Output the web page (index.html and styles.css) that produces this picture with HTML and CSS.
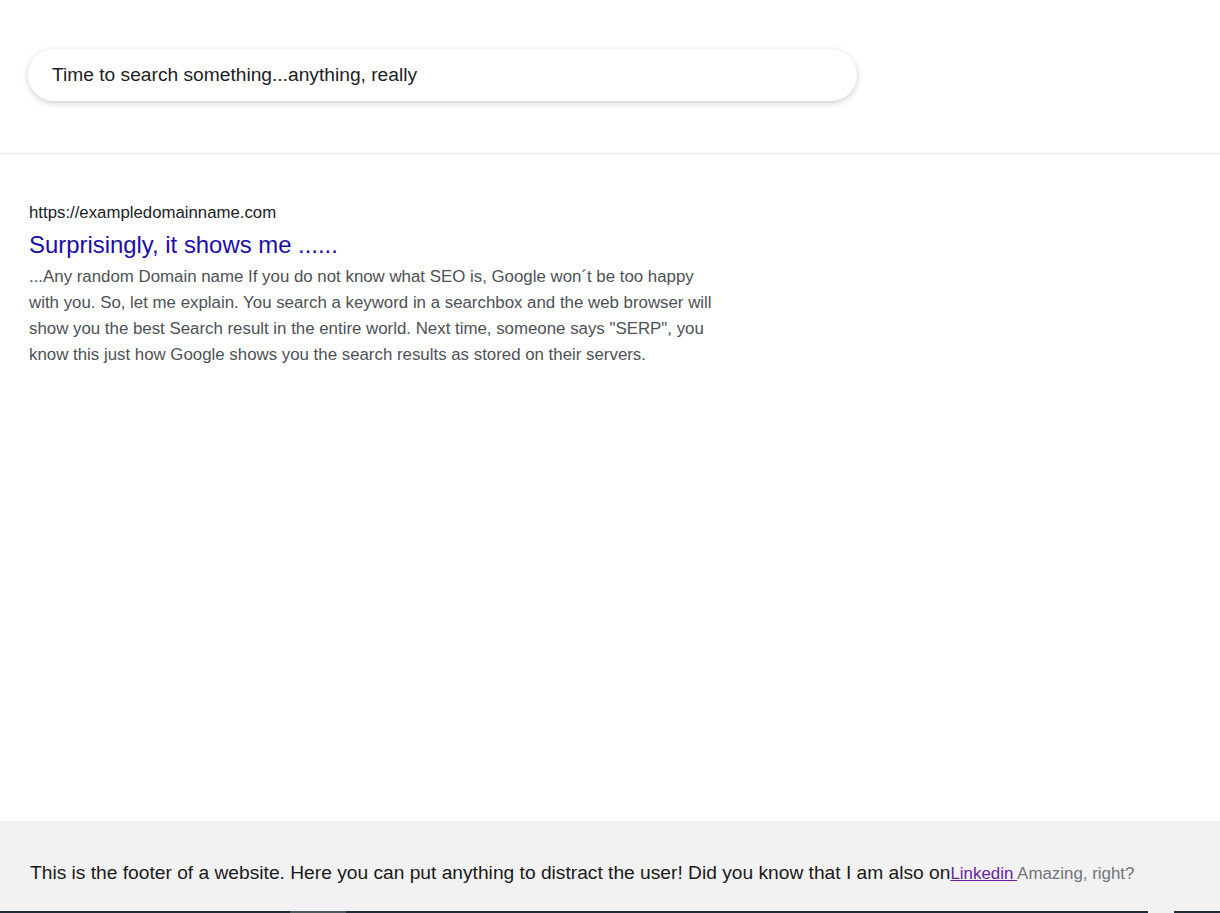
FILE: index.html
```html
<!DOCTYPE html>
<html lang="en">
<head>
<meta charset="utf-8">
<title>SERP</title>
<link rel="stylesheet" href="styles.css">
</head>
<body>
<div class="page">
  <header class="header">
    <div class="searchbox">Time to search something...anything, really</div>
  </header>
  <main class="results">
    <article class="result">
      <div class="result-url">https://exampledomainname.com</div>
      <a class="result-title" href="#">Surprisingly, it shows me ......</a>
      <p class="result-desc">...Any random Domain name If you do not know what SEO is, Google won´t be too happy with you. So, let me explain. You search a keyword in a searchbox and the web browser will show you the best Search result in the entire world. Next time, someone says "SERP", you know this just how Google shows you the search results as stored on their servers.</p>
    </article>
  </main>
  <footer class="footer">
    <p class="footer-text">This is the footer of a website. Here you can put anything to distract the user! Did you know that I am also on<a class="footer-link" href="#">Linkedin </a><span class="footer-muted">Amazing, right?</span></p>
    <div class="footer-strip">
      <span class="strip-a"></span>
      <span class="strip-b"></span>
      <span class="strip-c"></span>
      <span class="strip-gap"></span>
      <span class="strip-d"></span>
    </div>
  </footer>
</div>
</body>
</html>
```
FILE: styles.css
```css
* { box-sizing: border-box; }
html, body { margin: 0; padding: 0; }
body {
  font-family: "Liberation Sans", Arial, sans-serif;
  background: #fff;
  color: #202124;
}
.page {
  min-height: 913px;
  display: flex;
  flex-direction: column;
}
.header {
  height: 154px;
  padding: 49px 0 0 28px;
  border-bottom: 1px solid #e8e8e8;
}
.searchbox {
  width: 829px;
  height: 52px;
  border-radius: 26px;
  background: #fff;
  box-shadow: 0 2px 6px rgba(32, 33, 36, 0.22);
  padding: 0 24px;
  display: flex;
  align-items: center;
  font-size: 19.2px;
  color: #202124;
}
.results {
  padding: 49px 29px 0;
  flex: 1;
}
.result { width: 688px; }
.result-url {
  font-size: 16.8px;
  line-height: 20px;
  color: #202124;
}
.result-title {
  display: block;
  margin-top: 8px;
  font-size: 23.9px;
  line-height: 28px;
  color: #1a0dab;
  text-decoration: none;
}
.result-desc {
  margin: 5px 0 0;
  font-size: 16.85px;
  line-height: 26px;
  color: #4d5156;
}
.footer {
  height: 92px;
  background: #f2f2f2;
  display: flex;
  flex-direction: column;
}
.footer-text {
  margin: 0;
  padding: 41px 0 0 30px;
  flex: 1;
  font-size: 19.2px;
  line-height: 22px;
  color: #1a1a1a;
}
.footer-link {
  color: #681da8;
  text-decoration: underline;
  font-size: 16.9px;
}
.footer-muted {
  color: #70757a;
  font-size: 16.9px;
}
.footer-strip {
  display: flex;
  height: 2px;
}
.strip-a { width: 290px; background: #1f2d38; }
.strip-b { width: 56px; background: #4a5a60; }
.strip-c { width: 802px; background: #1f2d38; }
.strip-gap { width: 26px; background: #f2f2f2; }
.strip-d { flex: 1; background: #1f2d38; }
```
